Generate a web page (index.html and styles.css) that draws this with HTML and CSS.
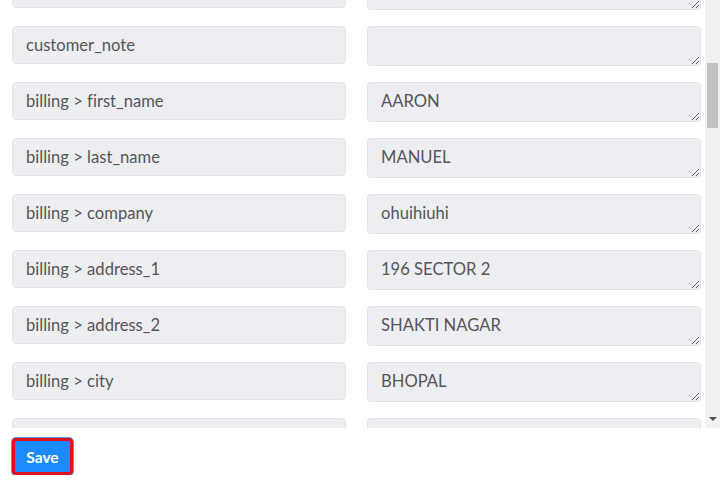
FILE: index.html
```html
<!DOCTYPE html>
<html>
<head>
<meta charset="utf-8">
<link rel="stylesheet" href="styles.css">
</head>
<body>
<div class="scroller">
  <div class="viewport">
    <div class="rows">
      <div class="field"></div><textarea class="value" readonly></textarea>
      <div class="field">customer_note</div><textarea class="value" readonly></textarea>
      <div class="field">billing &gt; first_name</div><textarea class="value" readonly>AARON</textarea>
      <div class="field">billing &gt; last_name</div><textarea class="value" readonly>MANUEL</textarea>
      <div class="field">billing &gt; company</div><textarea class="value" readonly>ohuihiuhi</textarea>
      <div class="field">billing &gt; address_1</div><textarea class="value" readonly>196 SECTOR 2</textarea>
      <div class="field">billing &gt; address_2</div><textarea class="value" readonly>SHAKTI NAGAR</textarea>
      <div class="field">billing &gt; city</div><textarea class="value" readonly>BHOPAL</textarea>
      <div class="field"></div><textarea class="value" readonly></textarea>
    </div>
  </div>
  <div class="scrollbar">
    <div class="thumb"></div>
    <div class="arrow"></div>
  </div>
</div>
<div class="actions">
  <button class="save">Save</button>
</div>
</body>
</html>
```
FILE: styles.css
```css
html, body {
  margin: 0;
  padding: 0;
  background: #ffffff;
  font-family: Lato, "Open Sans", sans-serif;
}
.scroller {
  display: flex;
  height: 428px;
  padding-left: 12px;
  width: 708px;
}
.viewport {
  width: 689px;
  overflow: hidden;
  height: 428px;
}
.rows {
  margin-top: -30px;
  display: grid;
  grid-template-columns: 334px 334px;
  column-gap: 21px;
  row-gap: 16px;
  grid-auto-rows: 40px;
}
.field, .value {
  box-sizing: border-box;
  background: #edeef2;
  border: 1px solid #e3e4e9;
  border-radius: 4px;
  color: #555558;
  font-family: Lato, "Open Sans", sans-serif;
  font-size: 16.6px;
  font-variant-ligatures: none;
}
.field {
  height: 38px;
  display: flex;
  align-items: center;
  padding: 0 13px 1px;
}
.value {
  height: 40px;
  width: 334px;
  margin: 0;
  padding: 8px 13px;
  line-height: 21px;
  resize: vertical;
  outline: none;
  overflow: hidden;
}
.scrollbar {
  width: 15px;
  margin-left: 4px;
  background: #f1f1f1;
  display: flex;
  flex-direction: column;
  align-items: center;
}
.thumb {
  margin-top: 63px;
  width: 11px;
  height: 65px;
  background: #c1c1c1;
}
.arrow {
  margin-top: auto;
  margin-bottom: 7px;
  width: 0;
  height: 0;
  border-left: 4px solid transparent;
  border-right: 4px solid transparent;
  border-top: 4px solid #505050;
}
.actions {
  padding: 10px 12px 0;
}
.save {
  box-sizing: border-box;
  width: 61px;
  height: 37px;
  background: #1a8cff;
  border: 3px solid #e0101e;
  border-radius: 4px;
  box-shadow: 0 0 0 1px #5aa0e0;
  color: #ffffff;
  font-family: Lato, "Open Sans", sans-serif;
  font-weight: 700;
  font-size: 15.5px;
  padding: 0;
}
```
